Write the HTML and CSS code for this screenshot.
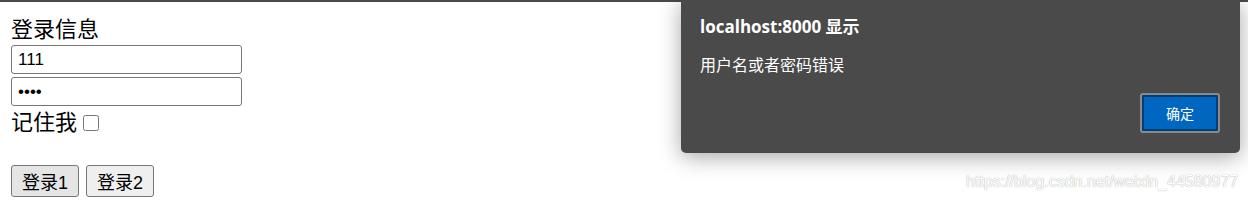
FILE: index.html
```html
<!DOCTYPE html>
<html>
<head>
  <meta charset="UTF-8">
  <title>登录</title>
  <link rel="stylesheet" href="styles.css">
</head>
<body>

<div class="topbar"></div>

<div class="login">
  <div class="caption">登录信息</div>
  <input class="field" type="text" value="111">
  <input class="field" type="password" value="1234">
  <div class="remember">记住我 <input class="check" type="checkbox"></div>
  <div class="buttons">
    <button class="btn pressed">登录1</button>
    <button class="btn">登录2</button>
  </div>
</div>

<div class="dialog">
  <div class="dialog-title">localhost:8000 显示</div>
  <div class="dialog-msg">用户名或者密码错误</div>
  <div class="dialog-foot">
    <button class="ok">确定</button>
  </div>
</div>

<div class="watermark">https://blog.csdn.net/weixin_44580977</div>

</body>
</html>
```

FILE: styles.css
```css
body {
  margin: 0;
  background: #fff;
  font-family: "Liberation Sans", "Noto Sans CJK SC", sans-serif;
  color: #000;
  overflow: hidden;
}
.topbar {
  height: 2px;
  background: #4a4a4a;
}
.login {
  padding: 16px 0 0 11px;
  display: flex;
  flex-direction: column;
  align-items: flex-start;
}
.caption {
  font-size: 22px;
  line-height: 24px;
  height: 24px;
  margin-bottom: 3px;
}
.field {
  box-sizing: border-box;
  width: 231px;
  height: 29px;
  margin: 0 0 3px 0;
  padding: 0 6px;
  border: 1px solid #767676;
  border-radius: 3px;
  font-family: "Liberation Sans", Arial, sans-serif;
  font-size: 17px;
  color: #000;
  outline: none;
}
.remember {
  display: flex;
  align-items: center;
  font-size: 22px;
  line-height: 24px;
  height: 24px;
  margin-top: 2px;
}
.check {
  width: 16px;
  height: 16px;
  margin: 0 0 0 6px;
}
.buttons {
  display: flex;
  gap: 7px;
  margin-top: 30px;
}
.btn {
  box-sizing: border-box;
  width: 68px;
  height: 32px;
  padding: 0;
  border: 1px solid #767676;
  border-radius: 3px;
  background: #efefef;
  font-family: "Liberation Sans", "Noto Sans CJK SC", sans-serif;
  font-size: 18px;
  color: #000;
}
.btn.pressed {
  background: #e5e5e5;
}
.dialog {
  position: absolute;
  left: 681px;
  top: 0;
  width: 559px;
  height: 153px;
  box-sizing: border-box;
  padding: 16px 20px 20px 19px;
  background: #4a4a4a;
  border-radius: 0 0 5px 5px;
  box-shadow: 0 4px 22px rgba(0, 0, 0, 0.35);
  color: #fff;
  display: flex;
  flex-direction: column;
}
.dialog-title {
  font-family: "Open Sans", "Noto Sans CJK SC", sans-serif;
  font-weight: bold;
  font-size: 17px;
  line-height: 22px;
}
.dialog-msg {
  margin-top: 15px;
  font-family: "Noto Sans CJK SC", sans-serif;
  font-size: 16px;
  line-height: 22px;
}
.dialog-foot {
  margin-top: auto;
  display: flex;
  justify-content: flex-end;
}
.ok {
  box-sizing: border-box;
  width: 76px;
  height: 36px;
  margin: 2px;
  border: 2px solid #003e73;
  box-shadow: 0 0 0 2px #8a8a8a;
  border-radius: 1px;
  background: #0067c0;
  color: #fff;
  font-family: "Noto Sans CJK SC", sans-serif;
  font-size: 14px;
}
.watermark {
  position: absolute;
  left: 966px;
  top: 173px;
  font-family: "Liberation Sans", Arial, sans-serif;
  font-size: 16px;
  color: #fff;
  text-shadow: 0 0 1px rgba(90, 90, 90, 0.7);
}
```
